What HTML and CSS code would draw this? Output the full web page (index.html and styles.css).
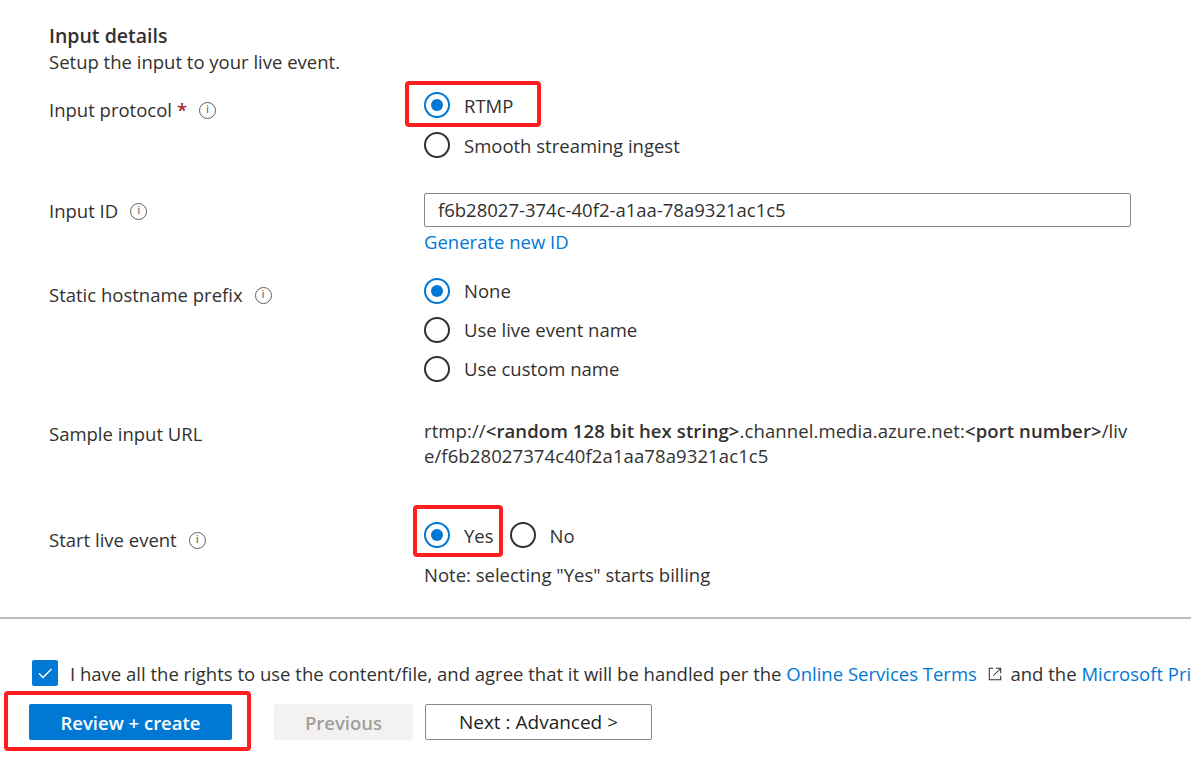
FILE: index.html
```html
<!DOCTYPE html>
<html lang="en">
<head>
<meta charset="utf-8">
<title>Input details</title>
<link rel="stylesheet" href="styles.css">
</head>
<body>
<div class="page">
  <section class="form">
    <h2 class="title">Input details</h2>
    <p class="subtitle">Setup the input to your live event.</p>

    <div class="row row-protocol">
      <div class="label lbl-protocol">Input protocol <span class="req">*</span><span class="info">i</span></div>
      <div class="control">
        <div class="radios col">
          <label class="radio on hl hl-rtmp"><span class="dot"></span><span>RTMP</span></label>
          <label class="radio"><span class="dot"></span><span>Smooth streaming ingest</span></label>
        </div>
      </div>
    </div>

    <div class="row row-id">
      <div class="label lbl-id">Input ID <span class="info">i</span></div>
      <div class="control">
        <div class="textbox">f6b28027-374c-40f2-a1aa-78a9321ac1c5</div>
        <a class="link gen">Generate new ID</a>
      </div>
    </div>

    <div class="row row-host">
      <div class="label lbl-host">Static hostname prefix <span class="info">i</span></div>
      <div class="control">
        <div class="radios col tight">
          <label class="radio on"><span class="dot"></span><span>None</span></label>
          <label class="radio"><span class="dot"></span><span>Use live event name</span></label>
          <label class="radio"><span class="dot"></span><span>Use custom name</span></label>
        </div>
      </div>
    </div>

    <div class="row row-url">
      <div class="label lbl-url">Sample input URL</div>
      <div class="control">
        <p class="url">rtmp://<b>&lt;random 128 bit hex string&gt;</b>.channel.media.azure.net:<b>&lt;port number&gt;</b>/liv<br>e/f6b28027374c40f2a1aa78a9321ac1c5</p>
      </div>
    </div>

    <div class="row row-start">
      <div class="label lbl-start">Start live event <span class="info">i</span></div>
      <div class="control">
        <div class="radios inline">
          <label class="radio on hl hl-yes"><span class="dot"></span><span>Yes</span></label>
          <label class="radio no"><span class="dot"></span><span>No</span></label>
        </div>
        <p class="note">Note: selecting "Yes" starts billing</p>
      </div>
    </div>
  </section>

  <hr class="divider">

  <footer class="footer">
    <div class="agree">
      <span class="check"><svg viewBox="0 0 26 26" width="26" height="26"><path d="M7 13.5 L11 17.5 L19.5 9" fill="none" stroke="#fff" stroke-width="1.4"/></svg></span>
      <span class="agree-text">I have all the rights to use the content/file, and agree that it will be handled per the <a class="link">Online Services Terms</a> <svg class="ext" viewBox="0 0 16 16" width="14" height="14"><path d="M6 1.5 H1.5 V14.5 H14.5 V10" fill="none" stroke="#323130" stroke-width="1.2"/><path d="M6 10 L14 2 M9 1.5 H14.5 V7" fill="none" stroke="#323130" stroke-width="1.2"/></svg> and the <a class="link">Microsoft Privacy Statement</a></span>
    </div>
    <div class="buttons">
      <span class="hl hl-review"><button class="btn primary">Review + create</button></span>
      <button class="btn disabled">Previous</button>
      <button class="btn outline">Next : Advanced &gt;</button>
    </div>
  </footer>
</div>
</body>
</html>
```

FILE: styles.css
```css
html, body {
  margin: 0;
  padding: 0;
  background: #ffffff;
  overflow: hidden;
}
body {
  font-family: "Open Sans", "Noto Sans", sans-serif;
  font-size: 18.5px;
  color: #323130;
  width: 1191px;
  height: 759px;
}
.page {
  width: 1191px;
}
.form {
  padding: 24px 0 0 49px;
}
.title {
  margin: 0;
  font-size: 19.5px;
  font-weight: 600;
  line-height: 24px;
}
.subtitle {
  margin: 2px 0 0;
  line-height: 24px;
}
.row {
  display: grid;
  grid-template-columns: 375px 707px;
}
.label {
  line-height: 24px;
  display: flex;
  align-items: center;
  white-space: nowrap;
}
.req {
  color: #a4262c;
  margin-left: 5px;
  font-weight: 600;
}
.info {
  box-sizing: border-box;
  width: 17px;
  height: 17px;
  border: 1.3px solid #605e5c;
  border-radius: 50%;
  font-size: 11px;
  line-height: 14px;
  text-align: center;
  color: #605e5c;
  margin-left: 12px;
  font-family: "DejaVu Sans", sans-serif;
}
.row-protocol { margin-top: 11px; }
.lbl-protocol { padding-top: 13px; align-self: start; }
.row-id { margin-top: 28px; }
.lbl-id { padding-top: 6px; align-self: start; }
.row-host { margin-top: 17px; }
.lbl-host { padding-top: 12px; align-self: start; }
.row-url { margin-top: 30px; }
.lbl-url { padding-top: 4px; align-self: start; }
.row-start { margin-top: 47px; }
.lbl-start { padding-top: 13px; align-self: start; }

.radios.col {
  display: flex;
  flex-direction: column;
}
.radios.inline {
  display: flex;
  flex-direction: row;
}
.radio {
  display: flex;
  align-items: center;
  height: 40px;
  gap: 14px;
  position: relative;
}
.radios.tight .radio { height: 39px; }
.radio.no { margin-left: 16px; }
.dot {
  box-sizing: border-box;
  width: 26px;
  height: 26px;
  border: 2px solid #323130;
  border-radius: 50%;
  position: relative;
  flex: none;
}
.radio.on .dot {
  border-color: #0078d4;
}
.radio.on .dot::after {
  content: "";
  position: absolute;
  left: 5px;
  top: 5px;
  width: 12px;
  height: 12px;
  border-radius: 50%;
  background: #0078d4;
}
.hl::before {
  content: "";
  position: absolute;
  border: 4px solid #ff1f1f;
  border-radius: 4px;
  pointer-events: none;
}
.hl-rtmp::before { left: -19px; top: -4px; width: 128px; height: 38px; }
.hl-yes::before { left: -11px; top: -10px; width: 82px; height: 44px; }

.textbox {
  box-sizing: border-box;
  height: 34px;
  border: 1.5px solid #8a8886;
  border-radius: 2px;
  padding: 0 13px;
  line-height: 31px;
}
.link {
  color: #0078d4;
  text-decoration: none;
}
.gen {
  display: block;
  line-height: 24px;
  margin-top: 3px;
}
.url {
  margin: 0;
  line-height: 25px;
  letter-spacing: 0.1px;
  white-space: nowrap;
}
.url b { font-weight: 600; }
.note {
  margin: 8px 0 0;
  line-height: 24px;
}
.divider {
  margin: 30px 0 0;
  border: 0;
  height: 2px;
  background: #bdbdbd;
}
.footer {
  padding: 41px 0 0 32px;
}
.agree {
  display: flex;
  align-items: center;
  white-space: nowrap;
  gap: 12px;
  overflow: hidden;
  width: 1159px;
}
.check {
  width: 26px;
  height: 26px;
  background: #0078d4;
  border-radius: 2px;
  flex: none;
  display: flex;
}
.ext {
  vertical-align: 0px;
  margin: 0 4px 0 6px;
}
.buttons {
  display: flex;
  align-items: center;
  margin-top: 18px;
  margin-left: -3px;
}
.btn {
  font-family: inherit;
  font-size: 18.5px;
  font-weight: 600;
  height: 36px;
  border-radius: 2px;
  padding: 0;
  box-sizing: border-box;
}
.hl-review {
  position: relative;
  display: flex;
}
.hl-review::before { left: -25px; top: -13px; width: 239px; height: 52px; }
.primary {
  width: 203px;
  background: #0078d4;
  color: #ffffff;
  border: 0;
}
.disabled {
  width: 139px;
  margin-left: 42px;
  background: #f3f2f1;
  color: #a19f9d;
  border: 0;
}
.outline {
  width: 227px;
  margin-left: 12px;
  background: #ffffff;
  color: #201f1e;
  border: 1.5px solid #8a8886;
  font-weight: 500;
  font-size: 19px;
}
```
